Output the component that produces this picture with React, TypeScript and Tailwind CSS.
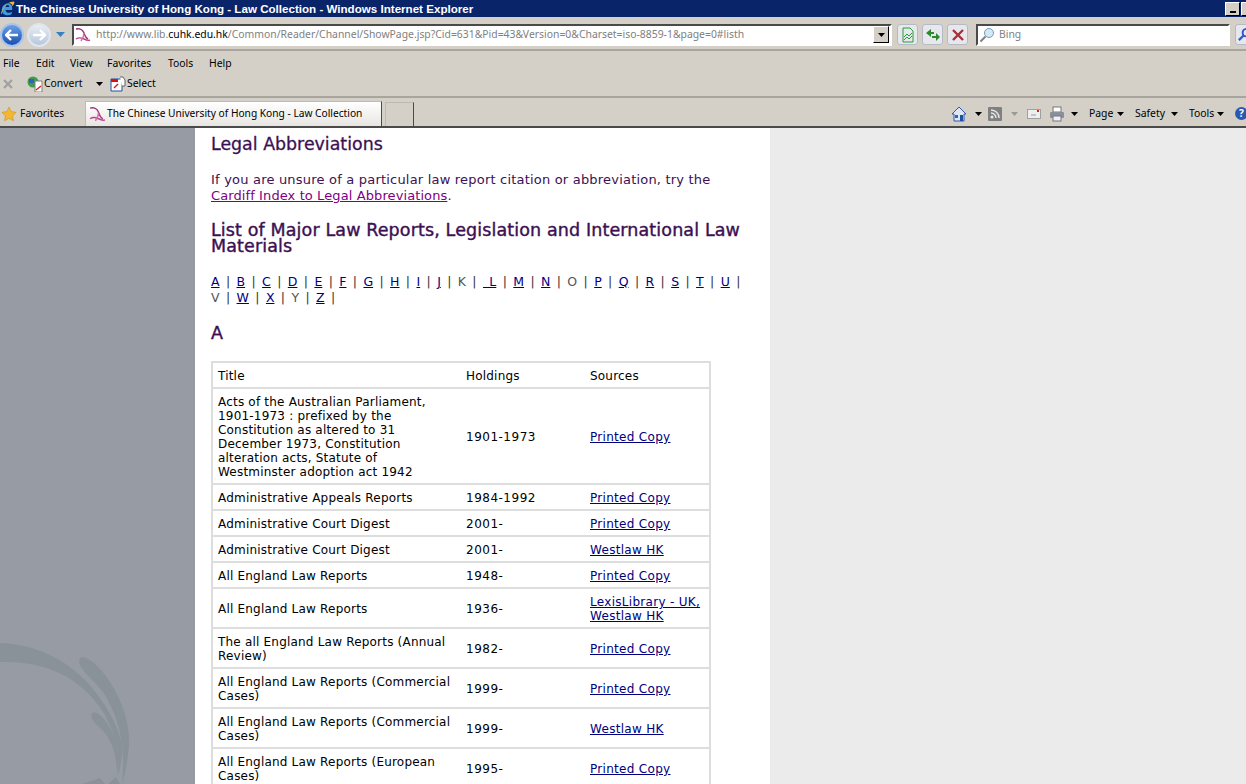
import React from "react";

const Fav = ({ className = "" }: { className?: string }) => (
  <svg viewBox="0 0 16 16" className={className} fill="none" stroke="#a0307a" strokeWidth="1.4">
    <path d="M1 2c4-1 7 1 8 4 1 3 2 5 4 6" />
    <path d="M1 12c3-2 6-1 8 0 2 1 4 2 6 1" stroke="#c04090" />
    <path d="M9 6c0 3-1 5-3 8" stroke="#d070a8" />
  </svg>
);

const Caret = ({ c = "#000" }: { c?: string }) => (
  <svg viewBox="0 0 7 4" className="w-[7px] h-[4px] block shrink-0"><path d="M0 0h7L3.500 4z" fill={c} /></svg>
);

const SmallBtn = ({ children }: { children: React.ReactNode }) => (
  <div className="w-[21px] h-[21px] rounded-[3px] border border-[#b5bac4] bg-[#e6e8ee] flex items-center justify-center">{children}</div>
);

type Row = { t: string[]; h: string; s: string[] };
const rows: Row[] = [
  { t: ["Acts of the Australian Parliament,", "1901-1973 : prefixed by the", "Constitution as altered to 31", "December 1973, Constitution", "alteration acts, Statute of", "Westminster adoption act 1942"], h: "1901-1973", s: ["Printed Copy"] },
  { t: ["Administrative Appeals Reports"], h: "1984-1992", s: ["Printed Copy"] },
  { t: ["Administrative Court Digest"], h: "2001-", s: ["Printed Copy"] },
  { t: ["Administrative Court Digest"], h: "2001-", s: ["Westlaw HK"] },
  { t: ["All England Law Reports"], h: "1948-", s: ["Printed Copy"] },
  { t: ["All England Law Reports"], h: "1936-", s: ["LexisLibrary - UK,", "Westlaw HK"] },
  { t: ["The all England Law Reports (Annual", "Review)"], h: "1982-", s: ["Printed Copy"] },
  { t: ["All England Law Reports (Commercial", "Cases)"], h: "1999-", s: ["Printed Copy"] },
  { t: ["All England Law Reports (Commercial", "Cases)"], h: "1999-", s: ["Westlaw HK"] },
  { t: ["All England Law Reports (European", "Cases)"], h: "1995-", s: ["Printed Copy"] },
];

const letters = "ABCDEFGHIJKLMNOPQRSTUVWXYZ".split("");
const noLink = new Set(["K", "O", "V", "Y"]);

export default function App() {
  return (
    <div className="w-[1246px] h-[784px] overflow-hidden flex flex-col bg-[#d4d0c8] font-['Noto_Sans',sans-serif] text-[10.4px] text-black">
      {/* title bar */}
      <div className="h-[17px] bg-[#0a246a] flex items-center text-white font-bold text-[11.6px] shrink-0">
        <svg viewBox="0 0 16 17" className="w-[15px] h-[17px] shrink-0">
          <path d="M13 10H6c0 3 4 4 7 2l-1 3c-5 2-10 0-10-5 0-6 6-8 9-6 2 1 2 3 2 6zM6 7h4c0-3-4-3-4 0z" fill="#3f9ae0" />
          <path d="M1 14C3 6 9 1 15 1c1 2-1 4-2 5 0-2-1-3-3-3-4 1-7 6-8 11z" fill="#e8b840" />
        </svg>
        <span className="ml-[1px] whitespace-nowrap font-['Liberation_Sans',sans-serif]">The Chinese University of Hong Kong - Law Collection - Windows Internet Explorer</span>
        <div className="ml-auto flex mr-[-10px]">
          <div className="w-[15px] h-[14px] bg-[#d4d0c8] border-t border-l border-white border-b border-r border-b-black border-r-black flex items-end justify-center pb-[2px]"><div className="w-[6px] h-[2px] bg-black" /></div>
          <div className="w-[15px] h-[14px] ml-[1px] bg-[#d4d0c8] border-t border-l border-white border-b border-r border-b-black border-r-black" />
        </div>
      </div>
      {/* address row */}
      <div className="h-[34px] pt-[3px] flex items-center shrink-0 border-b-2 border-b-[#a8a59e]">
        <div className="w-[72px] h-[28px] flex items-center shrink-0">
          <div className="w-[24px] h-[24px] rounded-full bg-gradient-to-b from-[#6a9fe6] to-[#1a4fb0] border-2 border-[#a9c4ea] flex items-center justify-center">
            <svg viewBox="0 0 14 12" className="w-[14px] h-[12px]"><path d="M6 1L1 6l5 5M1 6h12" stroke="#fff" strokeWidth="2.400" fill="none" /></svg>
          </div>
          <div className="w-[24px] h-[24px] ml-[3px] rounded-full bg-gradient-to-b from-[#e8edf5] to-[#b8c6dc] border-2 border-[#dfe5ef] flex items-center justify-center">
            <svg viewBox="0 0 14 12" className="w-[14px] h-[12px]"><path d="M8 1l5 5-5 5M13 6H1" stroke="#fff" strokeWidth="2.400" fill="none" /></svg>
          </div>
          <svg viewBox="0 0 9 5" className="w-[9px] h-[5px] ml-[5px]"><path d="M0 0h9L4.500 5z" fill="#3a7fc0" /></svg>
        </div>
        <div className="w-[820px] h-[22px] border-2 border-[#4a4a4a] border-r-white border-b-white bg-white flex items-center shrink-0">
          <Fav className="w-[16px] h-[16px] ml-[1px] shrink-0" />
          <div className="ml-[5px] whitespace-nowrap text-[#808080] flex-1">
            http://www.lib.<span className="text-black">cuhk.edu.hk</span>/Common/Reader/Channel/ShowPage.jsp?Cid=631&amp;Pid=43&amp;Version=0&amp;Charset=iso-8859-1&amp;page=0#listh
          </div>
          <div className="w-[16px] h-[17px] mr-[1px] bg-[#d4d0c8] border border-t-white border-l-white border-r-black border-b-black flex items-center justify-center shrink-0"><Caret /></div>
        </div>
        <div className="flex gap-[4px] ml-[5px] shrink-0">
          <SmallBtn>
            <svg viewBox="0 0 14 16" className="w-[14px] h-[16px]" fill="none" stroke="#2a9a3a"><path d="M2 1h7l3 3v11H2z" /><path d="M3 10l3-3 2 2 3-3M3 13l3-3 2 2 3-3" /></svg>
          </SmallBtn>
          <SmallBtn>
            <svg viewBox="0 0 16 14" className="w-[16px] h-[14px]" fill="#2c8a2c"><path d="M1 5l5-4v3h3v2H6v3zM15 9l-4 4v-3H7V8h4V5z" /></svg>
          </SmallBtn>
          <SmallBtn>
            <svg viewBox="0 0 12 12" className="w-[12px] h-[12px]"><path d="M1 1l10 10M11 1L1 11" stroke="#a83038" strokeWidth="2.400" /></svg>
          </SmallBtn>
        </div>
        <div className="ml-[8px] w-[254px] h-[22px] border-2 border-[#4a4a4a] border-r-white border-b-white bg-white flex items-center shrink-0">
          <svg viewBox="0 0 16 16" className="w-[16px] h-[16px] ml-[1px]" fill="none"><circle cx="10" cy="6" r="4.500" fill="#d4e8f6" stroke="#7a9ab8" /><path d="M6.500 9.500L1.500 14.500" stroke="#808080" strokeWidth="2" /></svg>
          <span className="ml-[4px] text-[#808080]">Bing</span>
        </div>
        <div className="ml-[5px] w-[20px] h-[21px] rounded-[3px] border border-[#b5bac4] bg-[#e6e8ee] shrink-0 flex items-center pl-[1px]">
          <svg viewBox="0 0 16 16" className="w-[15px] h-[15px] shrink-0" fill="none"><circle cx="10" cy="6" r="4" stroke="#2a5ad0" strokeWidth="2" /><path d="M7 9l-5 5" stroke="#2a5ad0" strokeWidth="2.400" /></svg>
        </div>
      </div>
      {/* menu + command rows */}
      <div className="h-[47px] pt-[1px] border-b-2 border-b-[#a8a59e] shrink-0 flex flex-col">
        <div className="h-[24px] flex items-center pl-[3px]">
          <span className="w-[33px]">File</span>
          <span className="w-[34px]">Edit</span>
          <span className="w-[37px]">View</span>
          <span className="w-[61px]">Favorites</span>
          <span className="w-[41px]">Tools</span>
          <span>Help</span>
        </div>
        <div className="h-[16px] flex items-center">
          <svg viewBox="0 0 10 10" className="w-[10px] h-[10px] ml-[3px]"><path d="M1 1l8 8M9 1L1 9" stroke="#a0a0a0" strokeWidth="2.200" /></svg>
          <svg viewBox="0 0 16 16" className="w-[16px] h-[16px] ml-[14px]"><circle cx="6" cy="6" r="5.500" fill="#3f9a4a" /><path d="M2 3h5v4H2z" fill="#3060c0" /><path d="M8 5h7v11H8z" fill="#fff" stroke="#808080" /><path d="M9 14l5-4" stroke="#d02020" strokeWidth="1.500" /></svg>
          <span className="ml-[1px] w-[40px]">Convert</span>
          <span className="ml-[12px]"><Caret /></span>
          <svg viewBox="0 0 16 16" className="w-[16px] h-[16px] ml-[7px]"><path d="M1 3h11v12H1z" fill="#fff" stroke="#2050a0" /><path d="M1 3h7v3H1z" fill="#e01010" /><path d="M4 12l4-4" stroke="#d02020" strokeWidth="1.500" /><path d="M10 1h3l2 3v6h-3" fill="#fff" stroke="#606060" /></svg>
          <span className="ml-[1px]">Select</span>
        </div>
      </div>
      {/* tab row */}
      <div className="h-[30px] pt-[3px] flex items-center shrink-0 border-b-2 border-b-[#4a4a4a]">
        <svg viewBox="0 0 16 16" className="w-[16px] h-[16px] ml-[1px] shrink-0"><path d="M8 1l2.200 4.600 5 .7-3.600 3.500.9 5L8 12.400 3.500 14.800l.9-5L.8 6.300l5-.7z" fill="#f2b830" stroke="#c08a20" strokeWidth=".5" /></svg>
        <span className="ml-[3px] w-[65px] shrink-0">Favorites</span>
        <div className="self-end h-[25px] w-[297px] shrink-0 bg-gradient-to-b from-white to-[#e8e6e2] border border-[#bdbab3] border-b-0 border-r-[#4a4a4a] flex items-center text-[10.2px]">
          <Fav className="w-[17px] h-[17px] ml-[3px] shrink-0" />
          <span className="ml-[1px] whitespace-nowrap">The Chinese University of Hong Kong - Law Collection</span>
        </div>
        <div className="self-end ml-[3px] h-[24px] w-[29px] shrink-0 bg-[#d4d0c8] border border-[#bdbab3] border-r-[#4a4a4a] border-b-0" />
        <div className="ml-auto flex items-center mr-[-2px]">
          <svg viewBox="0 0 16 16" className="w-[16px] h-[16px]"><path d="M8 1L1 8h2v7h10V8h2z" fill="#dfe6f2" stroke="#3058b0" /><path d="M9 9h3v6H9z" fill="#2050a0" /><path d="M4 9h3v3H4z" fill="#2a6ab0" /></svg>
          <span className="ml-[8px]"><Caret /></span>
          <svg viewBox="0 0 14 14" className="w-[14px] h-[14px] ml-[6px]"><rect width="14" height="14" rx="1" fill="#808080" /><circle cx="4" cy="10" r="1.500" fill="#e8e8e8" /><path d="M3 6a5 5 0 015 5M3 3a8 8 0 018 8" stroke="#e8e8e8" strokeWidth="1.400" fill="none" /></svg>
          <span className="ml-[9px]"><Caret c="#999" /></span>
          <svg viewBox="0 0 14 10" className="w-[14px] h-[10px] ml-[9px]"><rect x=".5" y=".5" width="13" height="9" fill="#eee" stroke="#a0a0a0" /><path d="M4 6h5" stroke="#999" /><rect x="10" y="1" width="2" height="2" fill="#d02020" /></svg>
          <svg viewBox="0 0 16 16" className="w-[16px] h-[16px] ml-[8px]"><rect x="4" y="1" width="8" height="5" fill="#fff" stroke="#777" /><rect x="1" y="6" width="14" height="6" rx="1" fill="#8a909a" /><rect x="4" y="10" width="8" height="5" fill="#eef" stroke="#777" /></svg>
          <span className="ml-[6px]"><Caret /></span>
          <span className="ml-[11px] w-[25px]">Page</span><span className="ml-[3px]"><Caret /></span>
          <span className="ml-[11px] w-[33px]">Safety</span><span className="ml-[3px]"><Caret /></span>
          <span className="ml-[11px] w-[25px]">Tools</span><span className="ml-[3px]"><Caret /></span>
          <div className="ml-[11px] w-[13px] h-[13px] rounded-full bg-[#2a5ab0] text-white text-[10px] font-bold leading-[13px] text-center overflow-hidden">?</div>
        </div>
      </div>
      {/* page */}
      <div className="flex-1 flex min-h-0 bg-[#ebebeb] font-['DejaVu_Sans',sans-serif]">
        <div className="w-[195px] bg-[#979ba4] shrink-0 relative overflow-hidden">
          <svg viewBox="0 0 195 164" className="absolute left-0 bottom-0 w-[195px] h-[164px]" fill="#8a9299">
            <path d="M0 23C30 24 60 35 85 60C105 80 120 110 122 125C123 135 120 150 118 155C120 130 115 115 105 95C90 70 60 40 0 42Z" />
            <path d="M80 38C85 35 95 42 105 55C120 75 130 100 129 125C128 140 125 155 122 164C126 130 120 100 105 75C95 60 75 48 80 38Z" />
            <path d="M92 93C96 90 104 97 110 108C118 122 120 140 117 155C117 135 112 122 104 112C98 105 89 100 92 93Z" />
            <path d="M82 164L100 158L105 164ZM108 164L116 157L120 164Z" />
          </svg>
        </div>
        <div className="w-[575px] bg-white shrink-0 pl-[16px] overflow-hidden">
          <h1 className="mt-[6px] text-[17.4px] leading-[20px] text-[#3c1053] font-normal [-webkit-text-stroke:0.3px_#3c1053]">Legal Abbreviations</h1>
          <p className="mt-[18px] text-[13px] leading-[16px] text-[#3c1053] tracking-[0.2px] whitespace-nowrap">
            If you are unsure of a particular law report citation or abbreviation, try the<br />
            <a className="text-[#800080] underline tracking-[0.1px]">Cardiff Index to Legal Abbreviations</a>.
          </p>
          <h2 className="mt-[18px] text-[17.5px] leading-[16px] text-[#3c1053] font-normal whitespace-nowrap tracking-[0.12px] [-webkit-text-stroke:0.4px_#3c1053]">List of Major Law Reports, Legislation and International Law<br />Materials</h2>
          <div className="mt-[20px] w-[532px] text-[12.5px] leading-[16px] text-[#333] [word-spacing:2.4px]">
            {letters.map((l) => (
              <React.Fragment key={l}>
                {noLink.has(l) ? <span className="text-[#555]">{l}</span> : <a className="text-[#000080] underline">{l === "L" ? "\u00a0L" : l}</a>}
                {" | "}
              </React.Fragment>
            ))}
          </div>
          <h3 className="mt-[17px] text-[17.5px] leading-[20px] text-[#3c1053] font-normal [-webkit-text-stroke:0.4px_#3c1053]">A</h3>
          <table className="mt-[18px] w-[498px] table-fixed border-collapse border-2 border-[#dddddd] text-[12px] leading-[14px] text-black tracking-[0.2px]">
            <colgroup>
              <col className="w-[249px]" />
              <col className="w-[124px]" />
              <col className="w-[125px]" />
            </colgroup>
            <tbody>
              <tr className="border-b-2 border-[#dddddd]">
                <td className="px-[5px] pt-[6px] pb-[4px]">Title</td>
                <td className="px-[5px] pt-[6px] pb-[4px]">Holdings</td>
                <td className="px-[5px] pt-[6px] pb-[4px]">Sources</td>
              </tr>
              {rows.map((r, i) => (
                <tr key={i} className="border-b-2 border-[#dddddd]">
                  <td className="px-[5px] pt-[6px] pb-[4px] whitespace-nowrap">{r.t.map((x, j) => <div key={j}>{x}</div>)}</td>
                  <td className="px-[5px] pt-[6px] pb-[4px] tracking-[0.5px]">{r.h}</td>
                  <td className="px-[5px] pt-[6px] pb-[4px] whitespace-nowrap tracking-[0.3px]">{r.s.map((x, j) => <div key={j}><a className="text-[#000080] underline">{x}</a></div>)}</td>
                </tr>
              ))}
            </tbody>
          </table>
        </div>
      </div>
    </div>
  );
}
